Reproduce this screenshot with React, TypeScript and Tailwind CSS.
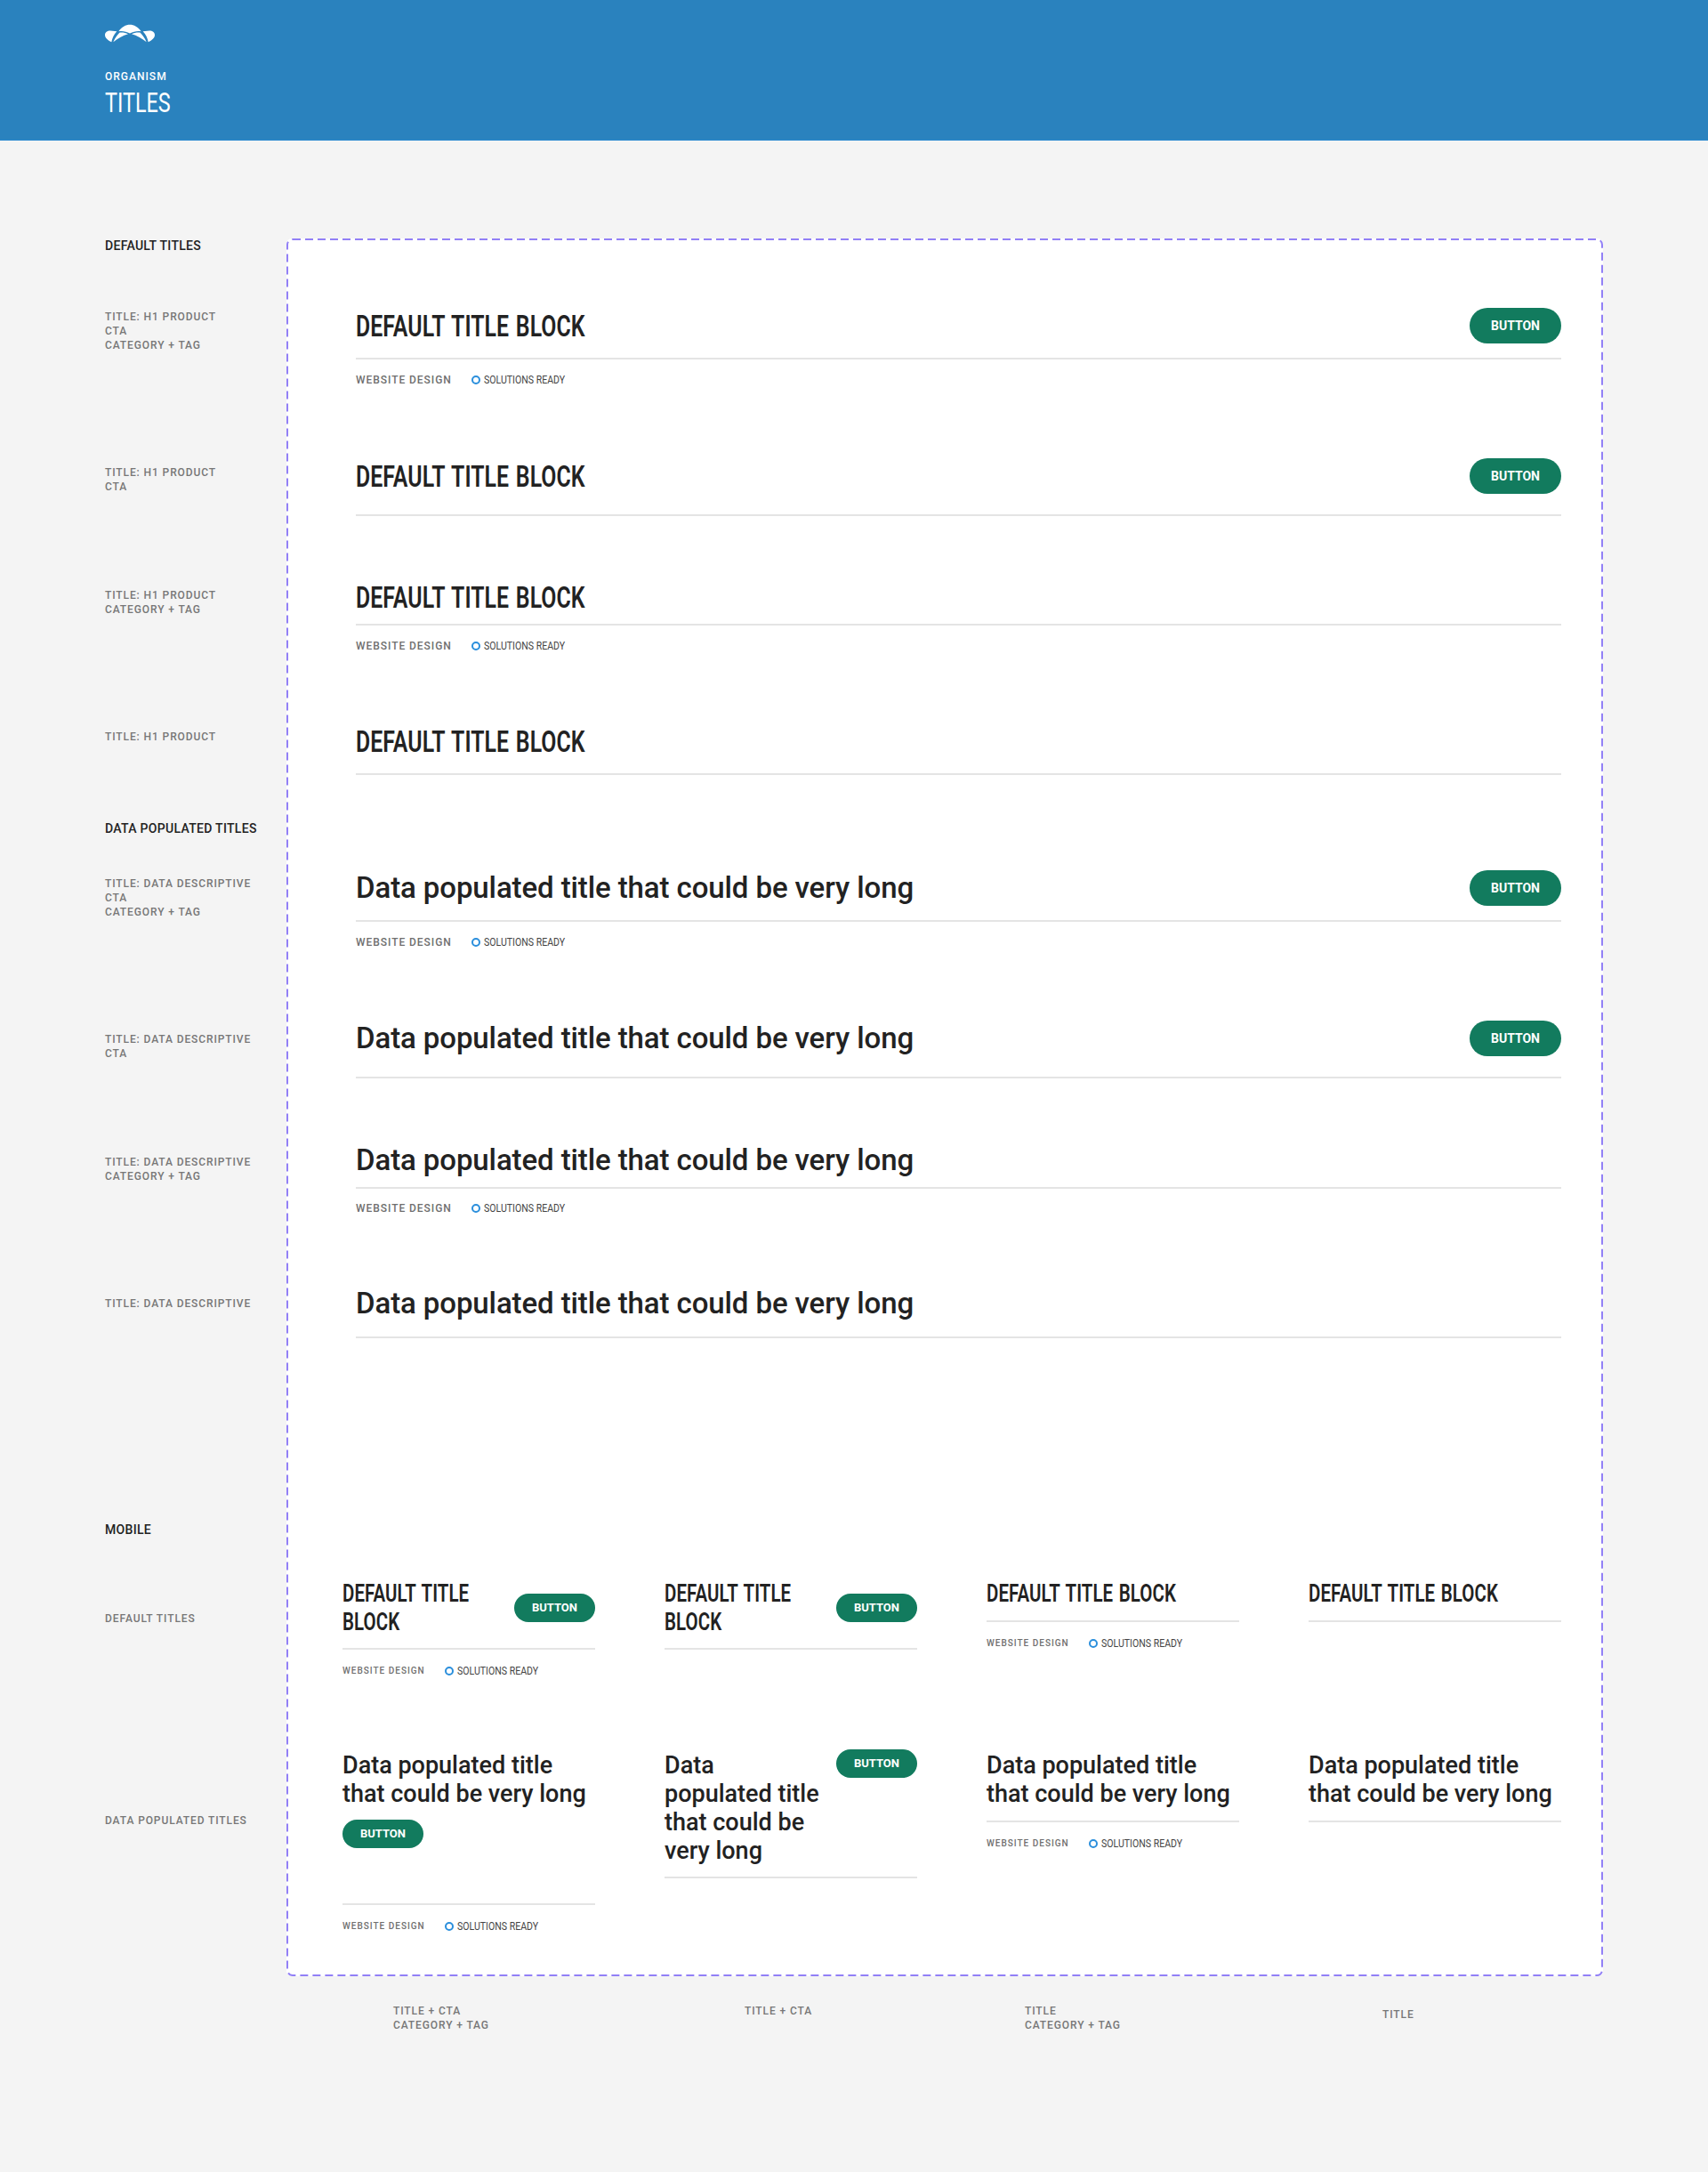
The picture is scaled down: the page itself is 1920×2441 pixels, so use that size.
import React from "react";

function Tags({ small, className = "" }: { small?: boolean; className?: string }) {
  return (
    <div className={`flex items-center ${className}`}>
      <span className={`font-['Roboto',sans-serif] font-medium uppercase text-[#6f6f6f] leading-4 ${small ? "text-[10px] tracking-[1px] w-[115px]" : "text-[12px] tracking-[0.95px] w-[130px]"}`}>
        Website Design
      </span>
      <span className="w-[10px] h-[10px] rounded-full border-2 border-[#2b8fdc] mr-[4px]" />
      <span className="inline-block origin-left scale-x-[0.88] whitespace-nowrap font-['Roboto',sans-serif] text-[12px] leading-4 text-[#444] uppercase">
        Solutions Ready
      </span>
    </div>
  );
}

function Btn({ small, className = "" }: { small?: boolean; className?: string }) {
  return (
    <span className={`shrink-0 flex items-center justify-center bg-[#127b5e] text-white rounded-full font-['Roboto',sans-serif] font-bold ${small ? "w-[91px] h-[32px] text-[13px]" : "w-[103px] h-[40px] text-[14px]"} ${className}`}>
      BUTTON
    </span>
  );
}

function Narrow({ children, small }: { children: React.ReactNode; small?: boolean }) {
  return (
    <div className={`flex-1 min-w-0 whitespace-nowrap origin-left scale-x-[0.73] font-['Roboto',sans-serif] font-semibold uppercase text-[#222] [word-spacing:2px] tracking-[0.1px] ${small ? "text-[28px] leading-[32px]" : "text-[34px] leading-[40px]"}`}>
      {children}
    </div>
  );
}

function Data({ children, small }: { children: React.ReactNode; small?: boolean }) {
  return (
    <div className={`font-['Roboto',sans-serif] font-medium text-[#222] ${small ? "text-[27px] leading-[32px]" : "text-[33px] leading-[40px] tracking-[-0.1px]"}`}>
      {children}
    </div>
  );
}

function Side({ children, className = "" }: { children: React.ReactNode; className?: string }) {
  return (
    <div className={`font-['Roboto',sans-serif] font-medium text-[12px] leading-4 tracking-[0.9px] uppercase text-[#777] ${className}`}>
      {children}
    </div>
  );
}

function Head({ children, className = "" }: { children: React.ReactNode; className?: string }) {
  return (
    <div className={`font-['Roboto',sans-serif] font-medium text-[14px] leading-4 tracking-[0.3px] uppercase text-[#222] ${className}`}>
      {children}
    </div>
  );
}

function Logo() {
  const half = (
    <>
      <path d="M0 36 C0 28 8 22 18 22 L40 24 C30 34 24 48 22 60 C10 54 0 46 0 36 Z" />
      <path d="M28 60 C34 46 44 34 50 28 C60 27 70 29 78 33 C60 38 42 48 28 60 Z" />
    </>
  );
  return (
    <svg className="block" width="56" height="21" viewBox="0 0 168 62" fill="#fff">
      <path d="M46 24 C56 10 70 2 84 2 C98 2 112 10 122 24 C110 22 96 24 84 31 C72 24 58 22 46 24 Z" />
      {half}
      <g transform="matrix(-1 0 0 1 168 0)">{half}</g>
    </svg>
  );
}

const rule = "border-b-2 border-[#e4e4e4]";

export default function App() {
  return (
    <div className="min-h-[2441px] bg-[#f4f4f4] overflow-hidden">
      <header className="h-[158px] bg-[#2a82be] border-b border-[#2b8ad0] pl-[118px] pt-[27px] text-white">
        <Logo />
        <div className="mt-[30px] font-['Roboto',sans-serif] font-medium text-[12px] leading-[16px] tracking-[1px]">ORGANISM</div>
        <div className="mt-[3px] origin-left scale-x-[0.73] font-['Roboto',sans-serif] font-normal text-[32px] leading-[36px]">TITLES</div>
      </header>

      <main className="flex pl-[118px] pt-[110px]">
        <aside className="w-[204px] shrink-0">
          <Head>Default Titles</Head>
          <Side className="mt-[64px]">Title: H1 Product<br />CTA<br />Category + Tag</Side>
          <Side className="mt-[127px]">Title: H1 Product<br />CTA</Side>
          <Side className="mt-[106px]">Title: H1 Product<br />Category + Tag</Side>
          <Side className="mt-[127px]">Title: H1 Product</Side>
          <Head className="mt-[87px]">Data Populated Titles</Head>
          <Side className="mt-[46px]">Title: Data Descriptive<br />CTA<br />Category + Tag</Side>
          <Side className="mt-[127px]">Title: Data Descriptive<br />CTA</Side>
          <Side className="mt-[106px]">Title: Data Descriptive<br />Category + Tag</Side>
          <Side className="mt-[127px]">Title: Data Descriptive</Side>
          <Head className="mt-[238px]">Mobile</Head>
          <Side className="mt-[84px]">Default Titles</Side>
          <Side className="mt-[211px]">Data Populated Titles</Side>
        </aside>

        <div className="relative w-[1480px] h-[1953px] shrink-0 bg-white border-2 border-transparent rounded-[6px]">
          <svg className="absolute -inset-[2px] w-[1480px] h-[1953px] pointer-events-none" fill="none">
            <rect x="1" y="1" width="1478" height="1951" rx="6" stroke="#9280f6" strokeWidth="2" strokeDasharray="9 5" />
          </svg>
          <div className="pl-[76px] pr-[45px]">
            <div className={`mt-[76px] flex items-center justify-between ${rule} pb-[16px]`}><Narrow>Default Title Block</Narrow><Btn /></div>
            <Tags className="mt-[15px]" />
            <div className={`mt-[80px] flex items-center justify-between ${rule} pb-[23px]`}><Narrow>Default Title Block</Narrow><Btn /></div>
            <div className={`mt-[71px] ${rule} pb-[10px]`}><Narrow>Default Title Block</Narrow></div>
            <Tags className="mt-[15px]" />
            <div className={`mt-[79px] ${rule} pb-[16px]`}><Narrow>Default Title Block</Narrow></div>

            <div className={`mt-[107px] flex items-center justify-between ${rule} pb-[16px]`}><Data>Data populated title that could be very long</Data><Btn /></div>
            <Tags className="mt-[15px]" />
            <div className={`mt-[80px] flex items-center justify-between ${rule} pb-[23px]`}><Data>Data populated title that could be very long</Data><Btn /></div>
            <div className={`mt-[72px] ${rule} pb-[10px]`}><Data>Data populated title that could be very long</Data></div>
            <Tags className="mt-[14px]" />
            <div className={`mt-[79px] ${rule} pb-[17px]`}><Data>Data populated title that could be very long</Data></div>
          </div>

          <div className="mt-[271px] pl-[61px] pr-[45px] grid grid-cols-4 gap-x-[78px] items-start">
            <div>
              <div className={`flex items-center justify-between ${rule} pb-[13px]`}><Narrow small>Default Title<br />Block</Narrow><Btn small /></div>
              <Tags small className="mt-[16px]" />
            </div>
            <div>
              <div className={`flex items-center justify-between ${rule} pb-[13px]`}><Narrow small>Default Title<br />Block</Narrow><Btn small /></div>
            </div>
            <div>
              <div className={`${rule} pb-[14px]`}><Narrow small>Default Title Block</Narrow></div>
              <Tags small className="mt-[16px]" />
            </div>
            <div>
              <div className={`${rule} pb-[14px]`}><Narrow small>Default Title Block</Narrow></div>
            </div>

            <div className="mt-[82px] row-start-2">
              <Data small>Data populated title<br />that could be very long</Data>
              <Btn small className="mt-[13px]" />
              <div className={`mt-[62px] ${rule}`} />
              <Tags small className="mt-[16px]" />
            </div>
            <div className="mt-[82px] row-start-2">
              <div className={`flex items-start justify-between ${rule} pb-[13px]`}><Data small>Data<br />populated title<br />that could be<br />very long</Data><Btn small className="mt-[-2px]" /></div>
            </div>
            <div className="mt-[82px] row-start-2">
              <div className={`${rule} pb-[14px]`}><Data small>Data populated title<br />that could be very long</Data></div>
              <Tags small className="mt-[16px]" />
            </div>
            <div className="mt-[82px] row-start-2">
              <div className={`${rule} pb-[14px]`}><Data small>Data populated title<br />that could be very long</Data></div>
            </div>
          </div>
        </div>
      </main>

      <div className="relative h-[60px] mt-[31px]">
        <Side className="absolute left-[442px] top-0">Title + CTA<br />Category + Tag</Side>
        <Side className="absolute left-[837px] top-0">Title + CTA</Side>
        <Side className="absolute left-[1152px] top-0">Title<br />Category + Tag</Side>
        <Side className="absolute left-[1554px] top-[4px]">Title</Side>
      </div>
    </div>
  );
}
